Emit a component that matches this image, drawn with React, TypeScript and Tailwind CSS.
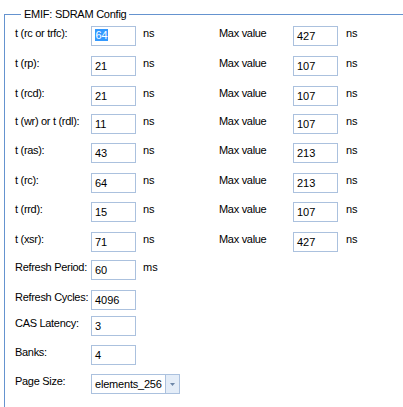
import React from "react";

type Row = { label: string; value: string; unit: string; max?: string; mt: string; selected?: boolean };

const timingRows: Row[] = [
  { label: "t (rc or trfc):", value: "64", unit: "ns", max: "427", mt: "mt-[5px]", selected: true },
  { label: "t (rp):", value: "21", unit: "ns", max: "107", mt: "mt-[10px]" },
  { label: "t (rcd):", value: "21", unit: "ns", max: "107", mt: "mt-[10px]" },
  { label: "t (wr) or t (rdl):", value: "11", unit: "ns", max: "107", mt: "mt-[8px]" },
  { label: "t (ras):", value: "43", unit: "ns", max: "213", mt: "mt-[9px]" },
  { label: "t (rc):", value: "64", unit: "ns", max: "213", mt: "mt-[10px]" },
  { label: "t (rrd):", value: "15", unit: "ns", max: "107", mt: "mt-[9px]" },
  { label: "t (xsr):", value: "71", unit: "ns", max: "427", mt: "mt-[10px]" },
  { label: "Refresh Period:", value: "60", unit: "ms", mt: "mt-[8px]" },
  { label: "Refresh Cycles:", value: "4096", unit: "", mt: "mt-[10px]" },
  { label: "CAS Latency:", value: "3", unit: "", mt: "mt-[6px]" },
  { label: "Banks:", value: "4", unit: "", mt: "mt-[9px]" },
];

function Box({ value, selected }: { value: string; selected?: boolean }) {
  return (
    <div className="w-[45px] h-[20px] shrink-0 border border-[#abc1de] bg-white pl-[3px] flex items-center leading-[13px]">
      {selected ? (
        <span className="self-start mt-[2px] leading-[12px] h-[12px] px-[0.5px] bg-[#3399ff] text-white">{value}</span>
      ) : (
        <span>{value}</span>
      )}
    </div>
  );
}

export default function App() {
  return (
    <div className="w-[403px] h-[407px] overflow-hidden bg-white text-black text-[11px] font-['Liberation_Sans',Arial,sans-serif]">
      <fieldset className="ml-[4px] mt-[8px] border-0 border-t border-l border-[#6593cf] pl-[10px] pb-[40px]">
        <legend className="ml-[6px] px-[3px] leading-[13px] tracking-[-0.25px]">EMIF: SDRAM Config</legend>
        {timingRows.map((r, i) => (
          <div key={i} className={`flex items-start h-[20px] ${r.mt}`}>
            <span className="w-[76px] shrink-0 pt-[1px] leading-[13px] tracking-[-0.3px] whitespace-nowrap">{r.label}</span>
            <Box value={r.value} selected={r.selected} />
            <span className="w-[83px] shrink-0 pl-[7px] pt-[1px] leading-[13px]">{r.unit}</span>
            {r.max && (
              <>
                <span className="w-[74px] shrink-0 pt-[1px] leading-[13px] tracking-[-0.3px]">Max value</span>
                <Box value={r.max} />
                <span className="pl-[8px] pt-[1px] leading-[13px]">ns</span>
              </>
            )}
          </div>
        ))}
        <div className="flex items-start h-[20px] mt-[9px]">
          <span className="w-[76px] shrink-0 pt-[1px] leading-[13px] tracking-[-0.3px]">Page Size:</span>
          <div className="w-[89px] h-[20px] border border-[#abc1de] flex">
            <span className="flex-1 pl-[3px] flex items-center leading-[13px] tracking-[-0.2px]">elements_256</span>
            <div className="w-[14px] border-l border-[#abc1de] bg-[#e4edf8] flex items-center justify-center">
              <svg width="5" height="3" viewBox="0 0 5 3">
                <path d="M0 0H5L2.5 3Z" fill="#6d87a8" />
              </svg>
            </div>
          </div>
        </div>
      </fieldset>
    </div>
  );
}
